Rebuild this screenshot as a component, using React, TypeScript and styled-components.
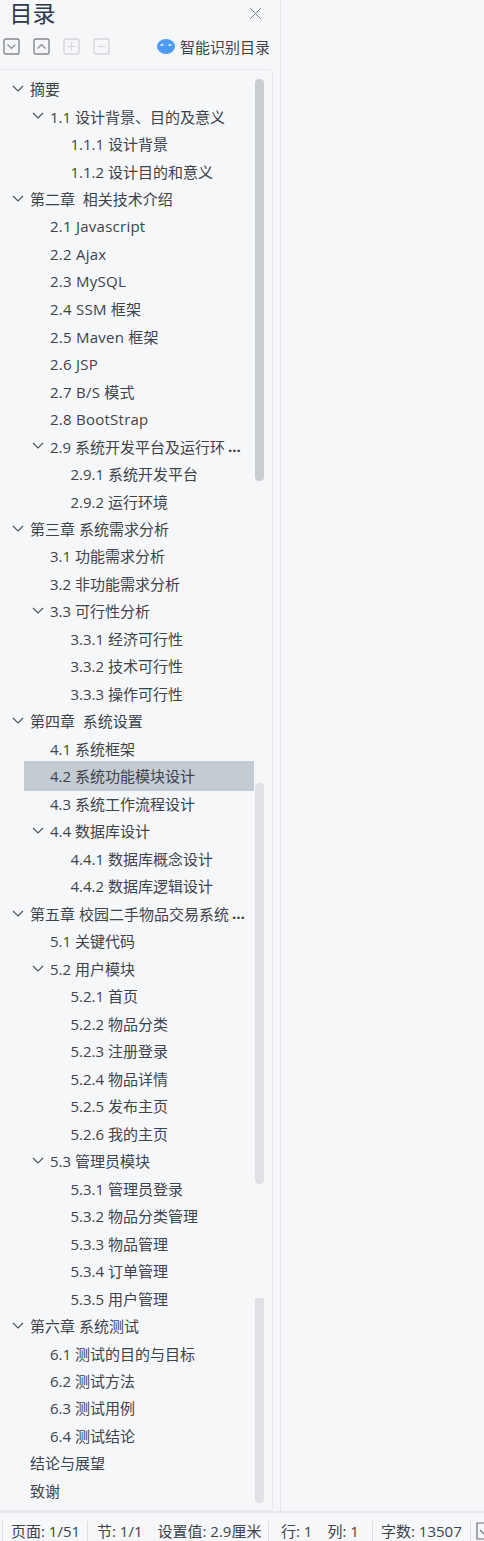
import React from 'react';
import styled, { createGlobalStyle } from 'styled-components';

type Level = 1 | 2 | 3;
type TocItem = { text: string; level: Level; open?: boolean; active?: boolean; clipped?: boolean };

const toc: TocItem[] = [
    { text: '摘要', level: 1, open: true },
    { text: '1.1 设计背景、目的及意义', level: 2, open: true },
    { text: '1.1.1 设计背景', level: 3 },
    { text: '1.1.2 设计目的和意义', level: 3 },
    { text: '第二章  相关技术介绍', level: 1, open: true },
    { text: '2.1 Javascript', level: 2 },
    { text: '2.2 Ajax', level: 2 },
    { text: '2.3 MySQL', level: 2 },
    { text: '2.4 SSM 框架', level: 2 },
    { text: '2.5 Maven 框架', level: 2 },
    { text: '2.6 JSP', level: 2 },
    { text: '2.7 B/S 模式', level: 2 },
    { text: '2.8 BootStrap', level: 2 },
    { text: '2.9 系统开发平台及运行环', level: 2, open: true, clipped: true },
    { text: '2.9.1 系统开发平台', level: 3 },
    { text: '2.9.2 运行环境', level: 3 },
    { text: '第三章 系统需求分析', level: 1, open: true },
    { text: '3.1 功能需求分析', level: 2 },
    { text: '3.2 非功能需求分析', level: 2 },
    { text: '3.3 可行性分析', level: 2, open: true },
    { text: '3.3.1 经济可行性', level: 3 },
    { text: '3.3.2 技术可行性', level: 3 },
    { text: '3.3.3 操作可行性', level: 3 },
    { text: '第四章  系统设置', level: 1, open: true },
    { text: '4.1 系统框架', level: 2 },
    { text: '4.2 系统功能模块设计', level: 2, active: true },
    { text: '4.3 系统工作流程设计', level: 2 },
    { text: '4.4 数据库设计', level: 2, open: true },
    { text: '4.4.1 数据库概念设计', level: 3 },
    { text: '4.4.2 数据库逻辑设计', level: 3 },
    { text: '第五章 校园二手物品交易系统', level: 1, open: true, clipped: true },
    { text: '5.1 关键代码', level: 2 },
    { text: '5.2 用户模块', level: 2, open: true },
    { text: '5.2.1 首页', level: 3 },
    { text: '5.2.2 物品分类', level: 3 },
    { text: '5.2.3 注册登录', level: 3 },
    { text: '5.2.4 物品详情', level: 3 },
    { text: '5.2.5 发布主页', level: 3 },
    { text: '5.2.6 我的主页', level: 3 },
    { text: '5.3 管理员模块', level: 2, open: true },
    { text: '5.3.1 管理员登录', level: 3 },
    { text: '5.3.2 物品分类管理', level: 3 },
    { text: '5.3.3 物品管理', level: 3 },
    { text: '5.3.4 订单管理', level: 3 },
    { text: '5.3.5 用户管理', level: 3 },
    { text: '第六章 系统测试', level: 1, open: true },
    { text: '6.1 测试的目的与目标', level: 2 },
    { text: '6.2 测试方法', level: 2 },
    { text: '6.3 测试用例', level: 2 },
    { text: '6.4 测试结论', level: 2 },
    { text: '结论与展望', level: 1 },
    { text: '致谢', level: 1 },
];

const Chevron = () => (
    <svg width="12" height="7" viewBox="0 0 12 7" fill="none">
        <path d="M1 1l5 5 5-5" stroke="#4a5058" strokeWidth="1.1" />
    </svg>
);

const ToolIcon = ({ kind, faded }: { kind: 'down' | 'up' | 'plus' | 'minus'; faded?: boolean }) => (
    <svg width="17" height="17" viewBox="0 0 17 17" fill="none">
        <rect x="1" y="1" width="15" height="15" rx="1.5" stroke={faded ? '#d4d6d9' : '#85888c'} strokeWidth="1.4" />
        {kind === 'down' && <path d="M4.5 6.5l4 4 4-4" stroke="#85888c" strokeWidth="1.1" />}
        {kind === 'up' && <path d="M4.5 10.5l4-4 4 4" stroke="#85888c" strokeWidth="1.1" />}
        {kind === 'plus' && <path d="M4.5 8.5h8M8.5 4.5v8" stroke="#d4d6d9" strokeWidth="1.1" />}
        {kind === 'minus' && <path d="M4.5 8.5h8" stroke="#d4d6d9" strokeWidth="1.1" />}
    </svg>
);

const SmartIcon = () => (
    <svg width="18" height="15" viewBox="0 0 18 15">
        <ellipse cx="9" cy="7.5" rx="9" ry="7.5" fill="#4c9bf5" />
        <path d="M3.5 6.5l1.5-1 1.5 1M11.5 6.5l1.5-1 1.5 1" stroke="#fff" strokeWidth="1.1" fill="none" />
    </svg>
);

const DocIcon = () => (
    <DocIconBox>
        <svg width="14" height="18" viewBox="0 0 14 18" fill="none">
            <path d="M13 1H1v16h12" stroke="#6a6e73" strokeWidth="1.2" />
            <path d="M4 8l2.5 2.5L9 13" stroke="#6a6e73" strokeWidth="1.1" />
        </svg>
    </DocIconBox>
);

const App = () => (
    <Page>
        <GlobalStyle />
        <Sidebar>
            <TitleRow>
                <Title>目录</Title>
                <CloseButton>
                    <svg width="13" height="13" viewBox="0 0 13 13" fill="none">
                        <path d="M1 1l11 11M12 1L1 12" stroke="#6e7379" strokeWidth="0.9" />
                    </svg>
                </CloseButton>
            </TitleRow>
            <Toolbar>
                <ToolIcon kind="down" />
                <ToolIcon kind="up" />
                <ToolIcon kind="plus" faded />
                <ToolIcon kind="minus" faded />
                <SmartButton>
                    <SmartIcon />
                    智能识别目录
                </SmartButton>
            </Toolbar>
            <TocPanel>
                {toc.map((item) => (
                    <Row key={item.text} $level={item.level} $active={item.active} $latin={/[A-Za-z]/.test(item.text)}>
                        <Arrow>{item.open && <Chevron />}</Arrow>
                        <span>{item.text}</span>
                        {item.clipped && <Dots>...</Dots>}
                    </Row>
                ))}
                <Scrollbar>
                    <Thumb $top={9} $height={402} />
                    <Thumb $top={713} $height={401} $light />
                    <Thumb $top={1228} $height={205} $light $flatTop />
                </Scrollbar>
            </TocPanel>
        </Sidebar>
        <StatusBar>
            <StatusCell $width={85} $pad={8}>页面: 1/51</StatusCell>
            <StatusCell $width={181}>
                <span>节: 1/1</span>
                <span>设置值: 2.9厘米</span>
            </StatusCell>
            <StatusCell $width={104} $pad={12}>
                <span>行: 1</span>
                <span>列: 1</span>
            </StatusCell>
            <StatusCell $width={98} $pad={8}>字数: 13507</StatusCell>
            <DocIcon />
        </StatusBar>
    </Page>
);

export default App;

const GlobalStyle = createGlobalStyle`
    html, body {
        margin: 0;
        padding: 0;
        background: #f6f7f9;
    }
    body {
        font-family: 'Open Sans', 'Noto Sans CJK SC', sans-serif;
        color: #3d434b;
    }
`;

const Page = styled.div`
    width: 484px;
    height: 1541px;
    display: flex;
    flex-direction: column;
    overflow: hidden;
    background: #f6f7f9;
`;
const Sidebar = styled.aside`
    width: 281px;
    height: 1511px;
    flex: none;
    box-sizing: border-box;
    border-right: 1px solid #e6e8eb;
    padding-right: 7px;
    display: flex;
    flex-direction: column;
`;
const TitleRow = styled.div`
    height: 28px;
    display: flex;
    align-items: center;
    justify-content: space-between;
    padding: 0 11px 0 9.5px;
`;
const Title = styled.h1`
    margin: 0;
    font-family: Inter, 'Noto Sans CJK SC', sans-serif;
    font-size: 23px;
    font-weight: 400;
    color: #2b3a4d;
    line-height: 28px;
`;
const CloseButton = styled.div`
    display: flex;
    margin-bottom: 2px;
`;
const Toolbar = styled.div`
    height: 36px;
    margin-bottom: 5px;
    display: flex;
    align-items: center;
    gap: 13px;
    padding: 0 3px;
`;
const SmartButton = styled.div`
    margin-left: auto;
    display: flex;
    align-items: center;
    gap: 5px;
    font-size: 15px;
    color: #3d434b;
`;
const TocPanel = styled.nav`
    position: relative;
    flex: 1;
    box-sizing: border-box;
    border: 1px solid #e6e8eb;
    border-left: none;
    border-radius: 0 3px 3px 0;
    padding-top: 5px;
`;
const Row = styled.div<{ $level: Level; $active?: boolean; $latin?: boolean }>`
    height: 27.49px;
    width: ${(props) => (props.$level === 1 ? 250 : 230)}px;
    margin-left: ${(props) => (props.$level === 1 ? 4 : 24)}px;
    box-sizing: border-box;
    padding-left: ${(props) => (props.$level === 3 ? 46.5 : 26)}px;
    position: relative;
    display: flex;
    align-items: center;
    font-size: 15px;
    letter-spacing: ${(props) => (props.$latin ? '0.25px' : 'normal')};
    white-space: pre;
    background: ${(props) => (props.$active ? '#c4ccd3' : 'transparent')};
    box-shadow: ${(props) => (props.$active ? '0 1px 0 #c4ccd3, 0 -1px 0 #c4ccd3' : 'none')};
`;
const Arrow = styled.span`
    position: absolute;
    left: 8px;
    top: 10px;
    display: flex;
`;
const Dots = styled.span`
    font-weight: 700;
    margin-left: 3px;
    line-height: 1;
    color: #30363d;
`;
const Scrollbar = styled.div`
    position: absolute;
    top: 0;
    right: 8px;
    width: 9px;
    height: 100%;
`;
const Thumb = styled.div<{ $top: number; $height: number; $light?: boolean; $flatTop?: boolean }>`
    position: absolute;
    left: 0;
    top: ${(props) => props.$top}px;
    width: 9px;
    height: ${(props) => props.$height}px;
    border-radius: ${(props) => (props.$flatTop ? '0 0 4px 4px' : '4px')};
    background: ${(props) => (props.$light ? '#dfe1e4' : '#c9ccd1')};
`;
const StatusBar = styled.footer`
    flex: 1;
    display: flex;
    align-items: center;
    box-sizing: border-box;
    border-top: 2px solid #e6e8eb;
    padding: 7px 0 0 2px;
    font-size: 15px;
    color: #3d434b;
    white-space: nowrap;
`;
const StatusCell = styled.div<{ $width: number; $pad?: number }>`
    width: ${(props) => props.$width}px;
    flex: none;
    box-sizing: border-box;
    height: 20px;
    line-height: 20px;
    display: flex;
    gap: 15px;
    padding-left: ${(props) => props.$pad ?? 9}px;
    border-left: 1px solid #dcdee1;
`;
const DocIconBox = styled.div`
    flex: none;
    display: flex;
    padding-left: 5px;
    border-left: 1px solid #dcdee1;
    height: 20px;
    align-items: center;
`;
